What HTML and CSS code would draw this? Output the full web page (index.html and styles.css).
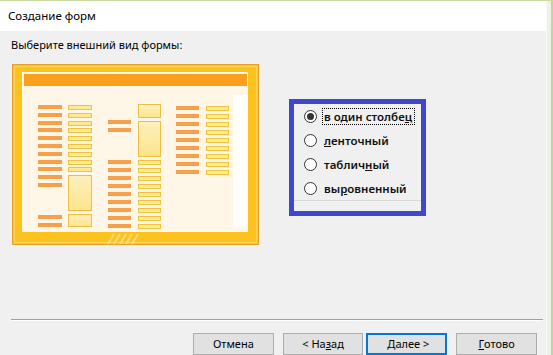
FILE: index.html
```html
<!DOCTYPE html>
<html lang="ru">
<head>
<meta charset="utf-8">
<title>Создание форм</title>
<link rel="stylesheet" href="styles.css">
</head>
<body>
<div class="screen">
  <div class="dialog">
    <div class="titlebar">Создание форм</div>
    <div class="content">
      <div class="prompt">Выберите внешний вид формы:</div>
      <div class="main">
        <svg class="preview" width="247" height="181" viewBox="0 0 247 181">
          <defs>
            <linearGradient id="hdr" x1="0" y1="0" x2="1" y2="0">
              <stop offset="0" stop-color="#f9a11c"/>
              <stop offset="1" stop-color="#f99e1e"/>
            </linearGradient>
            <linearGradient id="box" x1="0" y1="0" x2="0" y2="1">
              <stop offset="0" stop-color="#fdf0bf"/>
              <stop offset="1" stop-color="#fde48a"/>
            </linearGradient>
          </defs>
          <rect x="0.5" y="0.5" width="246" height="180" fill="#fcc31f" stroke="#e9a320"/>
          <rect x="2.5" y="2.5" width="242" height="176" fill="none" stroke="#fdd460"/>
          <rect x="10.5" y="8.5" width="225" height="159" fill="#fef6e7" stroke="#fffbf2"/>
          <rect x="12" y="10" width="223" height="12" fill="url(#hdr)"/>
          <rect x="221" y="31" width="14" height="132" fill="#fffefb"/>
          <g stroke="#fde28a" stroke-width="2" opacity="0.8">
            <line x1="96" y1="180" x2="102" y2="170"/>
            <line x1="102" y1="180" x2="108" y2="170"/>
            <line x1="108" y1="180" x2="114" y2="170"/>
            <line x1="114" y1="180" x2="120" y2="170"/>
            <line x1="120" y1="180" x2="126" y2="170"/>
          </g>
          <g fill="#f6a04d">
            <rect x="26" y="41" width="24" height="4"/>
            <rect x="26" y="49" width="24" height="4"/>
            <rect x="26" y="57" width="24" height="4"/>
            <rect x="26" y="64" width="24" height="4"/>
            <rect x="26" y="72" width="24" height="4"/>
            <rect x="26" y="80" width="24" height="4"/>
            <rect x="26" y="88" width="24" height="4"/>
            <rect x="26" y="96" width="24" height="4"/>
            <rect x="26" y="103" width="24" height="4"/>
            <rect x="26" y="111" width="24" height="4"/>
            <rect x="26" y="119" width="24" height="4"/>
            <rect x="26" y="151" width="24" height="4"/>
            <rect x="26" y="159" width="24" height="4"/>
            <rect x="96" y="56" width="23" height="4"/>
            <rect x="96" y="64" width="23" height="4"/>
            <rect x="96" y="96" width="23" height="4"/>
            <rect x="96" y="104" width="23" height="4"/>
            <rect x="96" y="112" width="23" height="4"/>
            <rect x="96" y="120" width="23" height="4"/>
            <rect x="96" y="128" width="23" height="4"/>
            <rect x="96" y="136" width="23" height="4"/>
            <rect x="96" y="144" width="23" height="4"/>
            <rect x="96" y="152" width="23" height="4"/>
            <rect x="96" y="160" width="23" height="4"/>
            <rect x="164" y="42" width="23" height="4"/>
            <rect x="164" y="50" width="23" height="4"/>
            <rect x="164" y="58" width="23" height="4"/>
            <rect x="164" y="66" width="23" height="4"/>
            <rect x="164" y="74" width="23" height="4"/>
            <rect x="164" y="82" width="23" height="4"/>
            <rect x="164" y="90" width="23" height="4"/>
            <rect x="164" y="98" width="23" height="4"/>
            <rect x="164" y="106" width="23" height="4"/>
          </g>
          <g fill="#fde98f" stroke="#f0c443" stroke-width="1">
            <rect x="56.5" y="41.5" width="23" height="4"/>
            <rect x="56.5" y="49.5" width="23" height="4"/>
            <rect x="56.5" y="57.5" width="23" height="4"/>
            <rect x="56.5" y="64.5" width="23" height="4"/>
            <rect x="56.5" y="72.5" width="23" height="4"/>
            <rect x="56.5" y="80.5" width="23" height="4"/>
            <rect x="56.5" y="88.5" width="23" height="4"/>
            <rect x="56.5" y="96.5" width="23" height="4"/>
            <rect x="56.5" y="103.5" width="23" height="4"/>
            <rect x="126.5" y="96.5" width="22" height="4"/>
            <rect x="126.5" y="104.5" width="22" height="4"/>
            <rect x="126.5" y="112.5" width="22" height="4"/>
            <rect x="126.5" y="120.5" width="22" height="4"/>
            <rect x="126.5" y="128.5" width="22" height="4"/>
            <rect x="126.5" y="136.5" width="22" height="4"/>
            <rect x="126.5" y="144.5" width="22" height="4"/>
            <rect x="126.5" y="152.5" width="22" height="4"/>
            <rect x="126.5" y="160.5" width="22" height="4"/>
            <rect x="194.5" y="42.5" width="22" height="4"/>
            <rect x="194.5" y="50.5" width="22" height="4"/>
            <rect x="194.5" y="58.5" width="22" height="4"/>
            <rect x="194.5" y="66.5" width="22" height="4"/>
            <rect x="194.5" y="74.5" width="22" height="4"/>
            <rect x="194.5" y="82.5" width="22" height="4"/>
            <rect x="194.5" y="90.5" width="22" height="4"/>
            <rect x="194.5" y="98.5" width="22" height="4"/>
            <rect x="194.5" y="106.5" width="22" height="4"/>
          </g>
          <g fill="url(#box)" stroke="#edbf45" stroke-width="1">
            <rect x="56.5" y="111.5" width="23" height="35"/>
            <rect x="56.5" y="150.5" width="23" height="12"/>
            <rect x="126.5" y="40.5" width="22" height="13"/>
            <rect x="126.5" y="57.5" width="22" height="35"/>
          </g>
        </svg>
        <div class="options">
          <div class="opt"><span class="radio checked"></span><span class="lbl focus">в один столбе<u>ц</u></span></div>
          <div class="opt"><span class="radio"></span><span class="lbl"><u>л</u>енточный</span></div>
          <div class="opt"><span class="radio"></span><span class="lbl">таблич<u>н</u>ый</span></div>
          <div class="opt"><span class="radio"></span><span class="lbl">вы<u>р</u>овненный</span></div>
          <div class="opt-sep"></div>
        </div>
      </div>
      <div class="sep"></div>
      <div class="buttons">
        <div class="btn">Отмена</div>
        <div class="btn gap-s">&lt; На<u>з</u>ад</div>
        <div class="btn default">&nbsp;<u>Д</u>алее &gt;</div>
        <div class="btn"><u>Г</u>отово</div>
      </div>
    </div>
  </div>
  <div class="edge"></div>
</div>
</body>
</html>
```

FILE: styles.css
```css
html, body {
  margin: 0;
  padding: 0;
  background: #f0f0f0;
}

.screen {
  width: 553px;
  height: 355px;
  overflow: hidden;
  display: flex;
  box-sizing: border-box;
  border-top: 1px solid #cadb9f;
  font-family: "Noto Sans", "Open Sans", sans-serif;
  font-size: 11px;
  color: #000;
}

.dialog {
  width: 546px;
  flex: none;
  display: flex;
  flex-direction: column;
}

.titlebar {
  height: 30px;
  line-height: 30px;
  font-size: 11.5px;
  background: #fff;
  padding-left: 8px;
  flex: none;
}

.content {
  flex: 1;
  background: #f0f0f0;
  display: flex;
  flex-direction: column;
}

.prompt {
  margin: 6px 0 0 11px;
  line-height: 16px;
}

.main {
  display: flex;
  align-items: flex-start;
  margin-top: 11px;
  padding-left: 12px;
}

.preview {
  flex: none;
  display: block;
}

.options {
  margin-left: 30px;
  margin-top: 35px;
  width: 137px;
  height: 117px;
  box-sizing: border-box;
  border: 5px solid #3f48cc;
  padding-left: 10px;
}

.opt {
  height: 24px;
  display: flex;
  align-items: center;
}

.radio {
  width: 13px;
  height: 13px;
  box-sizing: border-box;
  border: 1px solid #333;
  border-radius: 50%;
  background: #fff;
  margin-right: 6px;
  flex: none;
  display: flex;
  align-items: center;
  justify-content: center;
}

.radio.checked::after {
  content: "";
  width: 7px;
  height: 7px;
  border-radius: 50%;
  background: #333;
}

.lbl {
  font-size: 11.5px;
  font-weight: 600;
  color: #111;
  line-height: 15px;
  padding: 0 1px;
}

.lbl.focus {
  outline: 1px dotted #000;
  padding-right: 2px;
}

.opt-sep {
  margin-left: -10px;
  border-top: 1px solid #d9d9d9;
}

.sep {
  margin: auto 3px 0 11px;
  border-top: 1px solid #a0a0a0;
  border-bottom: 1px solid #fff;
}

.buttons {
  display: flex;
  padding-left: 193px;
  margin-top: 12px;
}

.btn {
  width: 82px;
  height: 22px;
  box-sizing: border-box;
  border: 1px solid #adadad;
  background: #e1e1e1;
  display: flex;
  align-items: center;
  justify-content: center;
  line-height: 16px;
  margin-right: 9px;
}

.btn.gap-s {
  margin-right: 3px;
}

.btn.default {
  border: 2px solid #0078d7;
}

.edge {
  flex: 1;
  background: #eef1e6;
  border-left: 1px solid #fafaf6;
  box-shadow: inset -2px 0 0 #c5d59a;
}
```
